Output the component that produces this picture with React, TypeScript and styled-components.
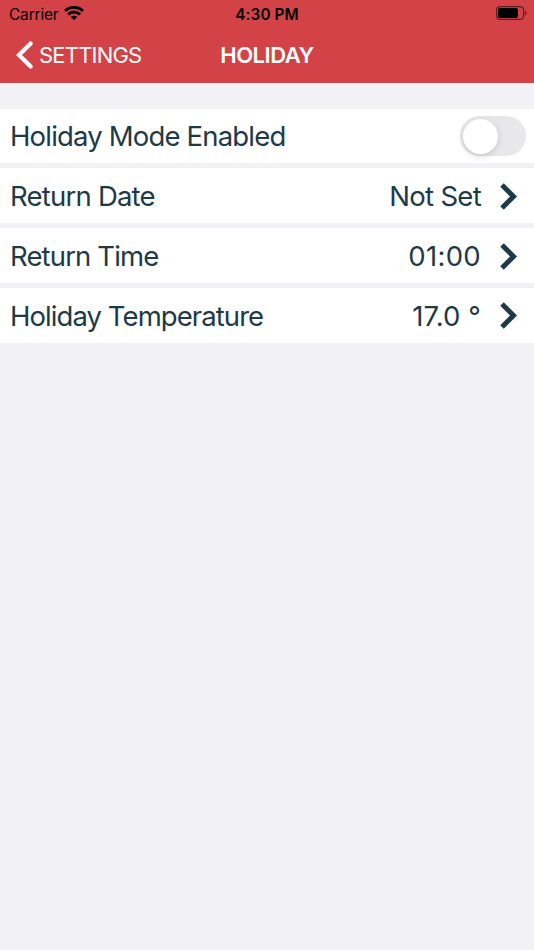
import styled, { createGlobalStyle } from "styled-components";

const GlobalStyle = createGlobalStyle`
  * {
    box-sizing: border-box;
  }
  body {
    margin: 0;
    background: #f2f1f6;
    font-family: Inter, "Liberation Sans", sans-serif;
  }
`;

const Screen = styled.div`
  width: 534px;
  height: 950px;
  overflow: hidden;
  background: #f2f1f6;
`;

const Header = styled.header`
  height: 82.7px;
  background: #d34247;
`;

const StatusBar = styled.div`
  display: grid;
  grid-template-columns: 1fr auto 1fr;
  align-items: center;
  height: 27px;
  padding: 0 7px;
  color: #000;
  font-size: 15.5px;
`;

const Carrier = styled.div`
  display: flex;
  align-items: center;
  gap: 6px;
  padding: 1px 0 0 2px;
  letter-spacing: -0.2px;
`;

const WifiIcon = styled.svg`
  margin-bottom: 2px;
`;

const Clock = styled.div`
  padding-top: 1px;
  font-weight: 600;
  font-size: 15.3px;
  letter-spacing: 0.1px;
`;

const Battery = styled.svg`
  justify-self: end;
  margin-bottom: 1px;
`;

const NavBar = styled.nav`
  display: grid;
  grid-template-columns: 1fr auto 1fr;
  align-items: center;
  height: 55px;
  padding: 0 16px;
  color: #fff;
  font-size: 22px;
`;

const BackButton = styled.div`
  display: flex;
  align-items: center;
  gap: 5px;
  letter-spacing: -0.8px;
`;

const Title = styled.div`
  font-weight: 600;
  letter-spacing: -0.5px;
`;

const List = styled.main`
  display: flex;
  flex-direction: column;
  gap: 5px;
  padding-top: 26px;
`;

const Row = styled.div`
  display: flex;
  align-items: center;
  height: 54.8px;
  padding: 0 8px 0 10px;
  background: #fff;
  color: #1e3a47;
  font-size: 27.5px;
`;

const Label = styled.div<{ $tracking?: number }>`
  flex: 1;
  padding-top: 0.4px;
  letter-spacing: ${(p) => p.$tracking ?? -0.82}px;
`;

const Value = styled.div<{ $tracking: number }>`
  padding-top: 0.4px;
  letter-spacing: ${(p) => p.$tracking}px;
`;

const Chevron = styled.svg`
  margin: 1px 8.5px 0 18.5px;
`;

const Toggle = styled.div<{ $on?: boolean }>`
  display: flex;
  align-items: center;
  justify-content: ${(p) => (p.$on ? "flex-end" : "flex-start")};
  width: 66px;
  height: 40px;
  padding: 0 2.5px;
  border-radius: 20px;
  background: ${(p) => (p.$on ? "#34c759" : "#e8e8ea")};
`;

const Knob = styled.div`
  width: 35px;
  height: 35px;
  border-radius: 50%;
  background: #fff;
  box-shadow: 0 2px 7px rgba(0, 0, 0, 0.15);
`;

const settings = [
  { label: "Return Date", value: "Not Set", labelTracking: -0.78, tracking: -0.7 },
  { label: "Return Time", value: "01:00", labelTracking: -0.86, tracking: 0.3 },
  { label: "Holiday Temperature", value: "17.0 °", labelTracking: -0.93, tracking: 0.1 },
];

export default function App() {
  return (
    <Screen>
      <GlobalStyle />
      <Header>
        <StatusBar>
          <Carrier>
            Carrier
            <WifiIcon width="20" height="14" viewBox="0 0 20 14" fill="none">
              <path
                d="M1 4.9a13 13 0 0 1 18 0M4 8.5a8.5 8.5 0 0 1 12 0"
                stroke="currentColor"
                strokeWidth="2.9"
              />
              <path d="M6.7 11a4.7 4.7 0 0 1 6.6 0L10 14z" fill="currentColor" />
            </WifiIcon>
          </Carrier>
          <Clock>4:30 PM</Clock>
          <Battery width="31" height="14" viewBox="0 0 31 14">
            <rect
              x="0.6"
              y="0.6"
              width="27"
              height="12.8"
              rx="3.5"
              fill="none"
              stroke="currentColor"
              strokeWidth="1.2"
              opacity="0.55"
            />
            <rect x="2" y="2" width="20" height="10" rx="2" fill="currentColor" />
            <path d="M29.2 4.5q3 2.5 0 5z" fill="currentColor" opacity="0.55" />
          </Battery>
        </StatusBar>
        <NavBar>
          <BackButton>
            <svg width="18" height="28" viewBox="0 0 18 28" fill="none">
              <path
                d="M14.6 2.5L3 14l11.6 11.5"
                stroke="currentColor"
                strokeWidth="4.2"
                strokeLinecap="round"
              />
            </svg>
            SETTINGS
          </BackButton>
          <Title>HOLIDAY</Title>
        </NavBar>
      </Header>
      <List>
        <Row>
          <Label>Holiday Mode Enabled</Label>
          <Toggle>
            <Knob />
          </Toggle>
        </Row>
        {settings.map((s) => (
          <Row key={s.label}>
            <Label $tracking={s.labelTracking}>{s.label}</Label>
            <Value $tracking={s.tracking}>{s.value}</Value>
            <Chevron width="18" height="27" viewBox="0 0 18 27" fill="none">
              <path d="M2 2l11.5 11.5L2 25" stroke="currentColor" strokeWidth="5" />
            </Chevron>
          </Row>
        ))}
      </List>
    </Screen>
  );
}
